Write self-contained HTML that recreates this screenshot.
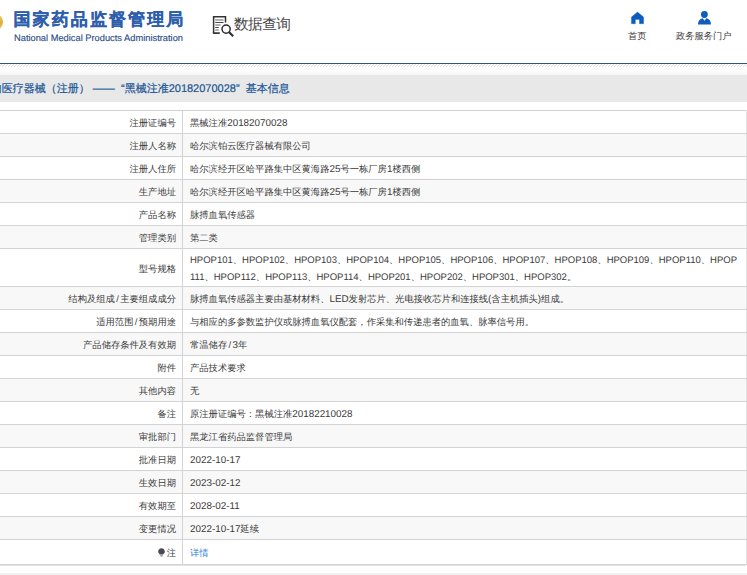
<!DOCTYPE html>
<html><head><meta charset="utf-8">
<style>
*{margin:0;padding:0;box-sizing:border-box}
html,body{text-rendering:geometricPrecision;width:747px;height:575px;overflow:hidden;background:#fff;font-family:"Liberation Sans",sans-serif;color:#333}
.hdr{position:absolute;left:0;top:0;width:747px;height:63px;background:#fff}
.emb{position:absolute;left:-11.5px;top:14px;width:14px;height:16px;border-radius:50%;background:radial-gradient(circle at 85% 55%,#dcae38 0,#ebcb6a 45%,#f8ecc0 100%)}
.logo{position:absolute;left:13.5px;top:7.5px;font-size:17px;letter-spacing:2.1px;font-weight:bold;color:#2e5eac;-webkit-text-stroke:0.2px #2e5eac;white-space:nowrap;line-height:24px}
.en{position:absolute;left:14px;top:32px;font-size:9.3px;color:#2f5088;-webkit-text-stroke:0.15px #2f5088;white-space:nowrap;line-height:12px}
.sq{position:absolute;left:213px;top:15px;width:22px;height:22px}
.sqt{position:absolute;left:234px;top:13.5px;font-size:14.7px;letter-spacing:-0.6px;color:#444;line-height:22px;white-space:nowrap}
.nav{position:absolute;top:0;font-size:9.25px;color:#3a3a3a;line-height:12px;white-space:nowrap;text-align:center}
.line{position:absolute;left:0;top:63px;width:747px;height:1.3px;background:#2c5580}
.hatch{position:absolute;left:0;top:64px;width:747px;height:3px;background:repeating-linear-gradient(135deg,#fff 0,#fff 1.1px,#e0e0e0 1.1px,#e0e0e0 2.12px)}
.grad{position:absolute;left:0;top:68px;width:747px;height:7px;background:linear-gradient(#fff,#f6f6f6)}
.bar{position:absolute;left:0;top:75px;width:747px;height:27px;background:#e8e8e8}
.bar span{position:absolute;left:-20.2px;top:1px;line-height:27px;font-size:11px;color:#1b5596;-webkit-text-stroke:0.2px #1b5596;white-space:pre}
table{position:absolute;left:-1px;top:110px;width:748px;border-collapse:collapse;font-size:9.3px;table-layout:fixed}
td{border:1px solid #d4d3d4;height:23px;vertical-align:middle;color:#3a3a3a;padding-top:2px}
td.l{width:183px;text-align:right;padding-right:6px}
.e{font-size:9.85px}
.sl{margin:0 1.4px}
.hp .e{font-size:9.5px}
td.v{padding-left:7px;line-height:16px;white-space:nowrap;overflow:hidden}
tr.g td{background:#f8f8f8}
td.v{border-right-color:#e2e2e2}
.foot{position:absolute;left:0;top:573px;width:747px;height:2px;background:#f1f1f1}
.bl{position:absolute;left:0;top:565px;width:746px;height:1px;background:#e2e2e2}
a{color:#2a7fd4;text-decoration:none}
</style></head><body>
<div class="hdr">
  <div class="emb"></div>
  <div class="logo">国家药品监督管理局</div>
  <div class="en">National Medical Products Administration</div>
  <svg style="position:absolute;left:200px;top:0" width="40" height="45" viewBox="200 0 40 45">
    <path d="M213.6 33V16.7H225.5V22.6" fill="none" stroke="#333" stroke-width="1.5"/>
    <path d="M212.9 33.1H219.8" stroke="#333" stroke-width="1.7"/>
    <path d="M215.2 20H223.6M215.2 25H220.6M215.2 30H218.8" stroke="#999" stroke-width="1.3"/>
    <path d="M215.2 22.5H223.6M215.2 27.5H218.8" stroke="#333" stroke-width="0.9"/>
    <circle cx="226.1" cy="29.1" r="4.1" fill="none" stroke="#2a2a33" stroke-width="1.5"/>
    <path d="M229.2 32.2L233.2 36.2" stroke="#2a2a33" stroke-width="2.1"/>
  </svg>
  <div class="sqt">数据查询</div>
  <svg style="position:absolute;left:620px;top:0" width="30" height="30" viewBox="620 0 30 30">
    <path d="M637.5 12L643.6 17V23.8H639.4V19.5H635.4V23.8H631.4V17Z" fill="#0d5cbf" stroke="#0d5cbf" stroke-width="0.3" stroke-linejoin="round"/>
  </svg>
  <div class="nav" style="left:628px;top:30px">首页</div>
  <svg style="position:absolute;left:690px;top:0" width="30" height="30" viewBox="690 0 30 30">
    <circle cx="704.4" cy="14.5" r="3.4" fill="#0d5cbf"/>
    <path d="M698 24.5C698 21 699.8 18.9 702.6 18.2L704.5 20.8L706.4 18.2C709.2 18.9 711 21 711 24.5Z" fill="#0d5cbf"/>
  </svg>
  <div class="nav" style="left:676px;top:30px">政务服务门户</div>
</div>
<div class="line"></div>
<div class="hatch"></div><div class="grad"></div>
<div class="bar"><span>境内医疗器械（注册） ——  “黑械注准20182070028”  基本信息</span></div>
<table><colgroup><col style="width:183px"><col></colgroup>
<tr><td class="l">注册证编号</td><td class="v">黑械注准<span class="e">20182070028</span></td></tr>
<tr class="g"><td class="l">注册人名称</td><td class="v">哈尔滨铂云医疗器械有限公司</td></tr>
<tr><td class="l">注册人住所</td><td class="v">哈尔滨经开区哈平路集中区黄海路<span class="e">25</span>号一栋厂房<span class="e">1</span>楼西侧</td></tr>
<tr class="g"><td class="l">生产地址</td><td class="v">哈尔滨经开区哈平路集中区黄海路<span class="e">25</span>号一栋厂房<span class="e">1</span>楼西侧</td></tr>
<tr><td class="l">产品名称</td><td class="v">脉搏血氧传感器</td></tr>
<tr class="g"><td class="l">管理类别</td><td class="v">第二类</td></tr>
<tr><td class="l" style="padding-top:4px">型号规格</td><td class="v hp" style="height:38px;padding-top:3px"><span class="e">HPOP101</span>、<span class="e">HPOP102</span>、<span class="e">HPOP103</span>、<span class="e">HPOP104</span>、<span class="e">HPOP105</span>、<span class="e">HPOP106</span>、<span class="e">HPOP107</span>、<span class="e">HPOP108</span>、<span class="e">HPOP109</span>、<span class="e">HPOP110</span>、<span class="e">HPOP</span><br><span class="e">111</span>、<span class="e">HPOP112</span>、<span class="e">HPOP113</span>、<span class="e">HPOP114</span>、<span class="e">HPOP201</span>、<span class="e">HPOP202</span>、<span class="e">HPOP301</span>、<span class="e">HPOP302</span>。</td></tr>
<tr class="g"><td class="l">结构及组成<span class="sl">/</span>主要组成成分</td><td class="v">脉搏血氧传感器主要由基材材料、<span class="e">LED</span>发射芯片、光电接收芯片和连接线<span class="e">(</span>含主机插头<span class="e">)</span>组成。</td></tr>
<tr><td class="l">适用范围<span class="sl">/</span>预期用途</td><td class="v">与相应的多参数监护仪或脉搏血氧仪配套，作采集和传递患者的血氧、脉率信号用。</td></tr>
<tr class="g"><td class="l">产品储存条件及有效期</td><td class="v">常温储存<span class="sl">/</span><span class="e">3</span>年</td></tr>
<tr><td class="l">附件</td><td class="v">产品技术要求</td></tr>
<tr class="g"><td class="l">其他内容</td><td class="v">无</td></tr>
<tr><td class="l">备注</td><td class="v">原注册证编号：黑械注准<span class="e">20182210028</span></td></tr>
<tr class="g"><td class="l">审批部门</td><td class="v">黑龙江省药品监督管理局</td></tr>
<tr><td class="l">批准日期</td><td class="v"><span class="e">2022-10-17</span></td></tr>
<tr class="g"><td class="l">生效日期</td><td class="v"><span class="e">2023-02-12</span></td></tr>
<tr><td class="l">有效期至</td><td class="v"><span class="e">2028-02-11</span></td></tr>
<tr class="g"><td class="l">变更情况</td><td class="v"><span class="e">2022-10-17</span>延续</td></tr>
<tr><td class="l" style="height:25px"><svg width="7" height="9" viewBox="0 0 7 9" style="vertical-align:-1px;margin-right:1.5px"><path d="M3.5 0.2C5.4 0.2 6.8 1.6 6.8 3.5C6.8 4.9 5.9 5.6 5.2 6.4H1.8C1.1 5.6 0.2 4.9 0.2 3.5C0.2 1.6 1.6 0.2 3.5 0.2Z" fill="#4a4a52"/><rect x="2.3" y="6.9" width="2.4" height="1.6" fill="#9a9aa0"/></svg>注</td><td class="v"><a>详情</a></td></tr>
</table>
<div class="bl"></div><div class="foot"></div>
</body></html>
